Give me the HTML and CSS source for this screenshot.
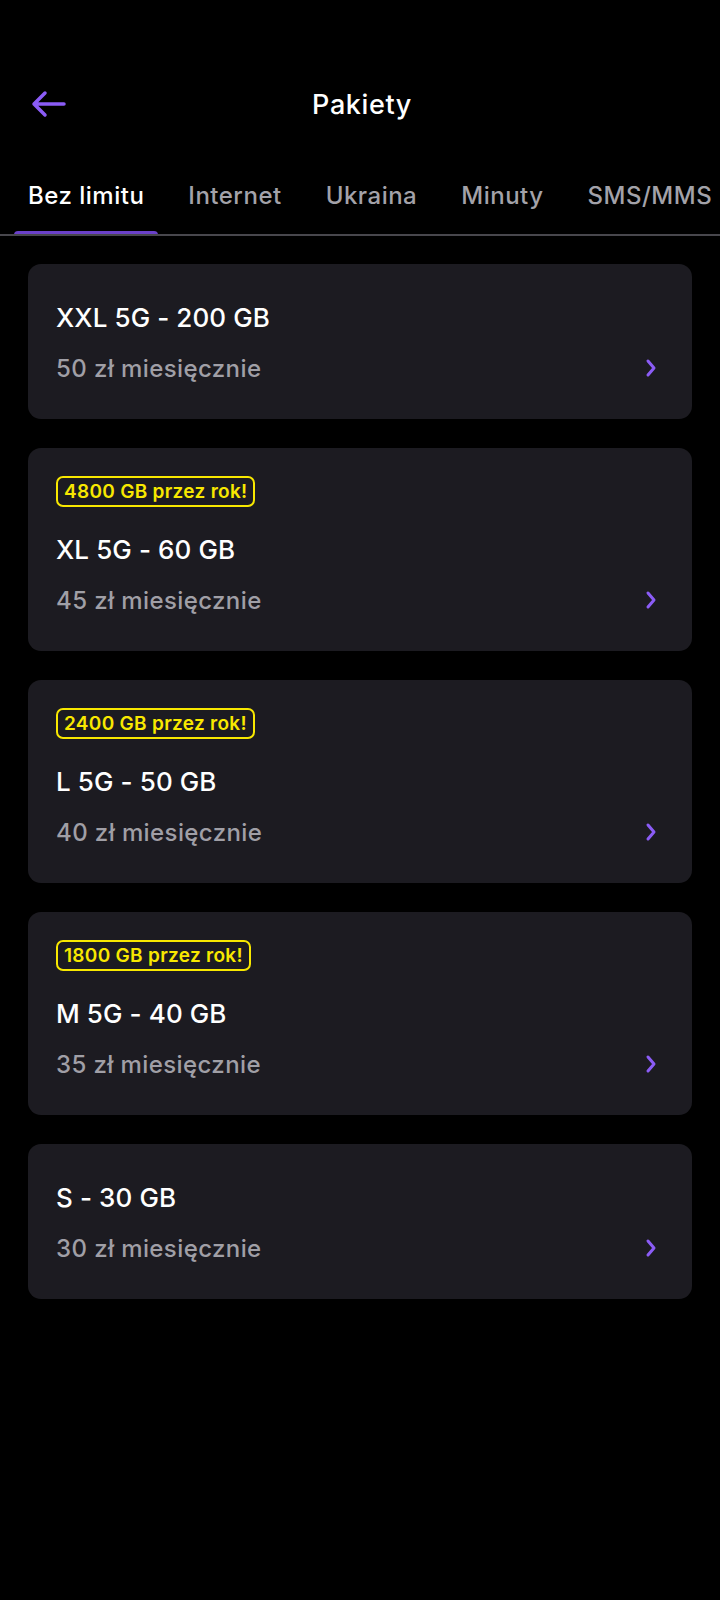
FILE: index.html
```html
<!DOCTYPE html>
<html lang="pl">
<head>
<meta charset="utf-8">
<title>Pakiety</title>
<link rel="stylesheet" href="styles.css">
</head>
<body>
<div class="screen">
  <header class="topbar">
    <button class="back" aria-label="Wstecz">
      <svg width="40" height="30" viewBox="0 0 40 30"><path d="M36 15H6M17 4L6 15l11 11" fill="none" stroke="#8b5cf6" stroke-width="3.5" stroke-linecap="round" stroke-linejoin="round"/></svg>
    </button>
    <h1 class="title">Pakiety</h1>
  </header>

  <nav class="tabs">
    <div class="tab active">Bez limitu</div>
    <div class="tab">Internet</div>
    <div class="tab">Ukraina</div>
    <div class="tab">Minuty</div>
    <div class="tab">SMS/MMS</div>
  </nav>

  <main class="list">
    <div class="card">
      <div class="name">XXL 5G - 200 GB</div>
      <div class="row"><span class="price">50 zł miesięcznie</span><svg class="chev" width="14" height="20" viewBox="0 0 14 20"><path d="M4 3l6 7-6 7" fill="none" stroke="#8b5cf6" stroke-width="3" stroke-linecap="round" stroke-linejoin="round"/></svg></div>
    </div>
    <div class="card">
      <span class="badge">4800 GB przez rok!</span>
      <div class="name">XL 5G - 60 GB</div>
      <div class="row"><span class="price">45 zł miesięcznie</span><svg class="chev" width="14" height="20" viewBox="0 0 14 20"><path d="M4 3l6 7-6 7" fill="none" stroke="#8b5cf6" stroke-width="3" stroke-linecap="round" stroke-linejoin="round"/></svg></div>
    </div>
    <div class="card">
      <span class="badge">2400 GB przez rok!</span>
      <div class="name">L 5G - 50 GB</div>
      <div class="row"><span class="price">40 zł miesięcznie</span><svg class="chev" width="14" height="20" viewBox="0 0 14 20"><path d="M4 3l6 7-6 7" fill="none" stroke="#8b5cf6" stroke-width="3" stroke-linecap="round" stroke-linejoin="round"/></svg></div>
    </div>
    <div class="card">
      <span class="badge">1800 GB przez rok!</span>
      <div class="name">M 5G - 40 GB</div>
      <div class="row"><span class="price">35 zł miesięcznie</span><svg class="chev" width="14" height="20" viewBox="0 0 14 20"><path d="M4 3l6 7-6 7" fill="none" stroke="#8b5cf6" stroke-width="3" stroke-linecap="round" stroke-linejoin="round"/></svg></div>
    </div>
    <div class="card">
      <div class="name">S - 30 GB</div>
      <div class="row"><span class="price">30 zł miesięcznie</span><svg class="chev" width="14" height="20" viewBox="0 0 14 20"><path d="M4 3l6 7-6 7" fill="none" stroke="#8b5cf6" stroke-width="3" stroke-linecap="round" stroke-linejoin="round"/></svg></div>
    </div>
  </main>
</div>
</body>
</html>
```

FILE: styles.css
```css
* { box-sizing: border-box; }
html, body {
  margin: 0;
  padding: 0;
  background: #000;
}
body {
  font-family: Inter, "Noto Sans", "Liberation Sans", sans-serif;
  color: #fff;
  width: 720px;
  min-height: 1600px;
}
.screen {
  display: flex;
  flex-direction: column;
}
.topbar {
  height: 56px;
  margin-top: 77px;
  display: flex;
  align-items: center;
  justify-content: center;
  position: relative;
}
.back {
  position: absolute;
  left: 28px;
  top: 12px;
  width: 40px;
  height: 30px;
  padding: 0;
  border: 0;
  background: none;
  display: flex;
}
.title {
  margin: 0;
  font-size: 27px;
  font-weight: 500;
  line-height: 32px;
  letter-spacing: 0.6px;
  padding-left: 4px;
}
.tabs {
  margin-top: 47px;
  display: flex;
  gap: 16px;
  padding-left: 14px;
  border-bottom: 2px solid #48474d;
  white-space: nowrap;
  overflow: hidden;
}
.tab {
  position: relative;
  padding: 0 14px 22px;
  font-size: 24px;
  line-height: 32px;
  font-weight: 500;
  color: #a3a2a9;
  letter-spacing: 0.5px;
}
.tab.active {
  color: #fff;
}
.tab.active::after {
  content: "";
  position: absolute;
  left: 0;
  right: 0;
  bottom: -2px;
  height: 5px;
  background: #6a40c9;
  border-radius: 4px 4px 0 0;
}
.list {
  padding: 28px 28px 0;
  display: flex;
  flex-direction: column;
  gap: 29px;
}
.card {
  background: #1c1b21;
  border-radius: 13px;
  padding: 28px 28px 27px;
  display: flex;
  flex-direction: column;
  align-items: flex-start;
}
.badge {
  height: 31px;
  padding: 0 6px;
  border: 2px solid #f8e800;
  border-radius: 7px;
  color: #f8e800;
  font-size: 19px;
  font-weight: 600;
  line-height: 27px;
  letter-spacing: 0.3px;
  margin-bottom: 17px;
}
.name {
  font-size: 26px;
  font-weight: 500;
  line-height: 52px;
  letter-spacing: 0.1px;
}
.row {
  align-self: stretch;
  display: flex;
  align-items: center;
  justify-content: space-between;
  height: 48px;
}
.price {
  font-size: 24px;
  font-weight: 500;
  color: #a09fa6;
  letter-spacing: 0.4px;
}
.chev {
  margin-right: 6px;
}
```
